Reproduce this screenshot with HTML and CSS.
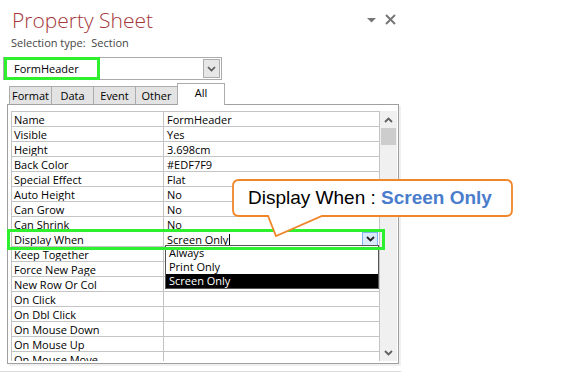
FILE: index.html
```html
<!DOCTYPE html>
<html lang="en">
<head>
  <meta charset="UTF-8">
  <title>Property Sheet</title>
  <link rel="stylesheet" href="styles.css">
</head>
<body>
  <div class="pane">
    <div class="title-row">
      <div class="title">Property Sheet</div>
      <div class="pane-icons">
        <svg width="9" height="6" viewBox="0 0 9 6"><polygon points="0,1 9,1 4.5,5.5" fill="#777"/></svg>
        <svg width="11" height="11" viewBox="0 0 11 11"><path d="M1 1 L10 10 M10 1 L1 10" stroke="#777" stroke-width="2"/></svg>
      </div>
    </div>
    <div class="seltype">Selection type:&nbsp; Section</div>

    <div class="combo">
      <span class="combo-text">FormHeader</span>
      <span class="combo-btn">
        <svg width="9" height="6" viewBox="0 0 9 6"><polyline points="1,1 4.5,4.5 8,1" fill="none" stroke="#555" stroke-width="1.6"/></svg>
      </span>
    </div>

    <div class="tabs">
      <div class="tab">Format</div>
      <div class="tab">Data</div>
      <div class="tab">Event</div>
      <div class="tab">Other</div>
      <div class="tab active">All</div>
    </div>

    <div class="panel">
      <div class="grid-wrap">
        <table class="grid">
          <tr><td class="key">Name</td><td>FormHeader</td></tr>
          <tr><td class="key">Visible</td><td>Yes</td></tr>
          <tr><td class="key">Height</td><td>3.698cm</td></tr>
          <tr><td class="key">Back Color</td><td>#EDF7F9</td></tr>
          <tr><td class="key">Special Effect</td><td>Flat</td></tr>
          <tr><td class="key">Auto Height</td><td>No</td></tr>
          <tr><td class="key">Can Grow</td><td>No</td></tr>
          <tr><td class="key">Can Shrink</td><td>No</td></tr>
          <tr>
            <td class="key">Display When</td>
            <td>
              <div class="edit">
                <span>Screen Only<span class="caret"></span></span>
                <span class="edit-btn">
                  <svg width="9" height="6" viewBox="0 0 9 6"><polyline points="1,1 4.5,4.5 8,1" fill="none" stroke="#222" stroke-width="1.8"/></svg>
                </span>
              </div>
            </td>
          </tr>
          <tr><td class="key">Keep Together</td><td></td></tr>
          <tr><td class="key">Force New Page</td><td></td></tr>
          <tr><td class="key">New Row Or Col</td><td></td></tr>
          <tr><td class="key">On Click</td><td></td></tr>
          <tr><td class="key">On Dbl Click</td><td></td></tr>
          <tr><td class="key">On Mouse Down</td><td></td></tr>
          <tr><td class="key">On Mouse Up</td><td></td></tr>
          <tr><td class="key">On Mouse Move</td><td></td></tr>
        </table>
      </div>
      <div class="scrollbar">
        <svg class="arrow-up" width="9" height="6" viewBox="0 0 9 6"><polyline points="1,5 4.5,1.5 8,5" fill="none" stroke="#606060" stroke-width="1.8"/></svg>
        <div class="thumb"></div>
        <div class="track"></div>
        <svg class="arrow-down" width="9" height="6" viewBox="0 0 9 6"><polyline points="1,1 4.5,4.5 8,1" fill="none" stroke="#606060" stroke-width="1.8"/></svg>
      </div>
    </div>

    <!-- open list of the Display When combo -->
    <div class="droplist">
      <div class="opt">Always</div>
      <div class="opt">Print Only</div>
      <div class="opt selected">Screen Only</div>
    </div>

    <div class="mark mark-combo"></div>
    <div class="mark mark-row"></div>

    <div class="callout">
      <svg width="290" height="66" viewBox="0 0 290 66">
        <path d="M9 4 H276 Q282 4 282 10 V34 Q282 40 276 40 H92 L46 60 L38 40 H9 Q3 40 3 34 V10 Q3 4 9 4 Z" fill="#fff" stroke="#f0862a" stroke-width="1.8"/>
      </svg>
      <div class="callout-text">Display When : <b>Screen Only</b></div>
    </div>
  </div>
</body>
</html>
```

FILE: styles.css
```css
body {
  margin: 0;
  background: #fff;
  color: #000;
  font-family: "Open Sans", "Liberation Sans", sans-serif;
  font-size: 11px;
}
.pane {
  position: relative;
  width: 401px;
  height: 371px;
  border-bottom: 1px solid #dcdcdc;
}
.title-row {
  display: flex;
  justify-content: space-between;
  height: 36px;
}
.title {
  padding: 7px 0 0 12px;
  font-size: 21px;
  font-weight: 300;
  line-height: 27px;
  color: #a4373a;
}
.pane-icons {
  display: flex;
  align-items: center;
  gap: 9px;
  height: 11px;
  padding: 14px 5px 0 0;
}
.seltype {
  height: 21px;
  padding-left: 11px;
  line-height: 14px;
  color: #444;
}
.combo {
  display: flex;
  justify-content: space-between;
  align-items: center;
  box-sizing: border-box;
  width: 219px;
  height: 23px;
  margin-left: 3px;
  padding: 0 1px 0 10px;
  border: 1px solid #ababab;
}
.combo-btn {
  display: flex;
  align-items: center;
  justify-content: center;
  box-sizing: border-box;
  width: 17px;
  height: 19px;
  background: #e6e6e6;
  border: 1px solid #acacac;
}
.tabs {
  display: flex;
  align-items: flex-end;
  height: 21px;
  margin-top: 3px;
  padding-left: 9px;
}
.tab {
  box-sizing: border-box;
  width: 43px;
  height: 18px;
  margin-right: -1px;
  border: 1px solid #acacac;
  border-bottom: none;
  background: #e3e3e3;
  line-height: 17px;
  text-align: center;
}
.tab.active {
  position: relative;
  z-index: 1;
  width: 48px;
  height: 22px;
  margin-bottom: -1px;
  background: #fff;
  line-height: 18px;
}
.panel {
  display: flex;
  box-sizing: border-box;
  width: 392px;
  height: 260px;
  margin-left: 7px;
  padding: 6px 1px 2px 3px;
  border: 1px solid #a0a0a0;
  box-shadow: 2px 2px 0 #f0f0f0;
}
.grid-wrap {
  width: 369px;
  overflow: hidden;
}
.grid {
  width: 369px;
  border-collapse: collapse;
  table-layout: fixed;
}
.grid td {
  height: 14px;
  padding: 0 0 0 3px;
  border: 1px solid #c4c4c4;
  line-height: 13px;
  white-space: nowrap;
  overflow: hidden;
}
.grid td.key {
  width: 149px;
  padding-left: 2px;
}
.edit {
  display: flex;
  justify-content: space-between;
  align-items: center;
}
.caret {
  display: inline-block;
  width: 1px;
  height: 12px;
  margin-left: 1px;
  vertical-align: -2px;
  background: #000;
}
.edit-btn {
  display: flex;
  align-items: center;
  justify-content: center;
  box-sizing: border-box;
  width: 16px;
  height: 14px;
  margin-right: 1px;
  background: #dcebfb;
  border: 1px solid #7eb4ea;
}
.scrollbar {
  display: flex;
  flex-direction: column;
  align-items: center;
  width: 17px;
  background: #f0f0f0;
}
.arrow-up {
  margin: 6px 0 5px;
}
.thumb {
  width: 15px;
  height: 17px;
  background: #cdcdcd;
}
.track {
  flex: 1;
}
.arrow-down {
  margin-bottom: 5px;
}
.droplist {
  position: absolute;
  left: 165px;
  top: 245px;
  box-sizing: border-box;
  width: 214px;
  border: 1px solid #555;
  background: #fff;
}
.opt {
  height: 14px;
  padding-left: 3px;
  line-height: 14px;
}
.opt.selected {
  background: #000;
  color: #fff;
}
.mark {
  position: absolute;
  border: 3px solid #2ff02f;
}
.mark-combo {
  left: 4px;
  top: 57px;
  width: 90px;
  height: 17px;
}
.mark-row {
  left: 7px;
  top: 229px;
  width: 372px;
  height: 15px;
}
.callout {
  position: absolute;
  left: 230px;
  top: 176px;
  width: 290px;
  height: 66px;
}
.callout svg {
  display: block;
}
.callout-text {
  position: absolute;
  left: 18px;
  top: 10px;
  font-family: "Liberation Sans", Arial, sans-serif;
  font-size: 19px;
  line-height: 24px;
  white-space: nowrap;
}
.callout-text b {
  color: #4a7dcc;
}
```
